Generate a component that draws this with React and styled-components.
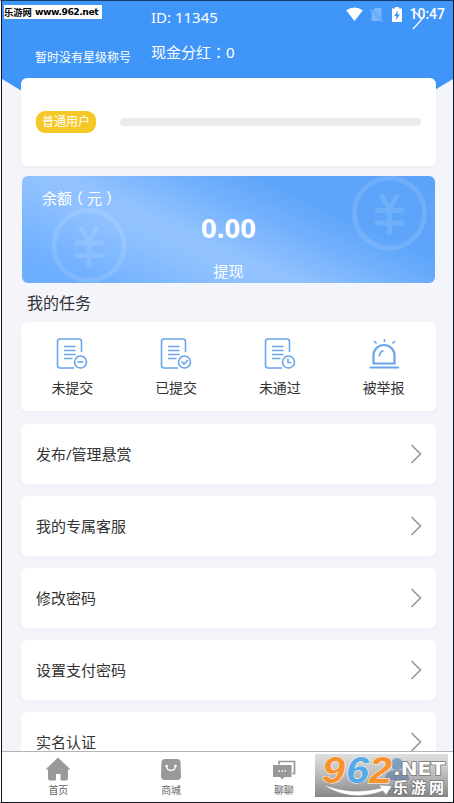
import React from 'react';
import styled, { createGlobalStyle } from 'styled-components';

const Global = createGlobalStyle`
  * { box-sizing: border-box; }
  body { margin: 0; background: #fff; overflow: hidden; }
`;
const Window = styled.div`
  width: 454px; height: 803px; overflow: hidden; position: relative;
  border: 1px solid #0d1420; border-top-color: #173c6c; border-left-color: #fff;
  font-family: "Noto Sans", "Noto Sans CJK SC", sans-serif; color: #333;
`;
const Screen = styled.div`
  height: 801px; border-left: 1px solid #0d1420; background: #f3f5fa;
  display: flex; flex-direction: column; overflow: hidden;
`;
const Scroll = styled.main`
  flex: 1; min-height: 0; overflow: hidden; position: relative;
`;
const HeaderShape = styled.svg`
  position: absolute; left: 0; top: 0; width: 451px; height: 100px;
`;
const Header = styled.header`
  position: relative; height: 77px; display: flex; color: #fff;
`;
const Star = styled.div`
  width: 149px; padding: 48px 0 0 33px; font-size: 12px; line-height: 18px; white-space: nowrap;
`;
const Ids = styled.div`
  flex: 1; padding-top: 5px; font-size: 15px; line-height: 22px; white-space: nowrap;
`;
const IdLine = styled.div`height: 35px;`;
const WideMark = styled.span`font-family: "Noto Sans CJK TC", sans-serif;`;
const Paren = styled.span`display: inline-block; transform: translateX(${p => p.$shift}px);`;
const Status = styled.div`
  position: absolute; right: 8px; top: 4px; height: 18px; display: flex; align-items: center;
  font: 500 14px/18px Roboto, sans-serif;
`;
const StatusIcon = styled.svg`
  display: block; width: ${p => p.$w}px; height: ${p => p.$h || 15}px; margin-right: ${p => p.$gap}px;
`;
const HeaderArrow = styled.svg`
  position: absolute; left: 408px; top: 8px; width: 14px; height: 22px;
`;
const Mark = styled.div`
  position: absolute; left: 3px; top: 4px; width: 98px; height: 14px; background: #fff; color: #000;
  display: flex; align-items: center; gap: 3px; white-space: nowrap;
`;
const MarkName = styled.span`font: 700 9.3px/14px "Noto Sans CJK SC", sans-serif;`;
const MarkSite = styled.span`
  font: 700 9.2px/14px "DejaVu Sans", sans-serif; letter-spacing: -0.45px;
`;
const Card = styled.section`
  position: relative; width: 415px; margin: 0 0 ${p => p.$gap}px 19px; height: ${p => p.$h}px;
  background: #fff; border-radius: 6px; box-shadow: 0 2px 5px rgba(60,80,120,.035);
  display: flex; align-items: center;
`;
const Tag = styled.span`
  margin-left: 15px; width: 60px; height: 22px; border-radius: 9px; background: #f5c828; color: #fff;
  font-size: 12px; line-height: 21px; text-align: center;
`;
const Track = styled.div`
  width: 301px; height: 8px; margin-left: 24px; border-radius: 4px; background: #eaeaea;
`;
const Balance = styled.section`
  position: relative; width: 413px; height: 107px; margin: 0 0 9px 20px; border-radius: 6px;
  overflow: hidden; color: #fff;
  background: linear-gradient(205deg, #5ba3fa 0%, #5ea5fa 28%, #72b0fc 40%, #92c3ff 58%, #8fc1ff 66%, #6eafff 90%, #6caeff 100%);
`;
const Coins = styled.svg`position: absolute; left: 0; top: 0; width: 413px; height: 107px;`;
const BalanceLabel = styled.div`
  position: relative; padding: 11px 0 0 20px; font-size: 15px; line-height: 22px; height: 33px;
`;
const Amount = styled.div`
  position: relative; text-align: center; font-size: 27.5px; line-height: 38px; font-weight: 700;
`;
const Withdraw = styled.div`
  position: relative; text-align: center; font-size: 15px; line-height: 22px; margin-top: 13px;
`;
const Heading = styled.h2`
  margin: 0 0 8px 25px; font-size: 16px; line-height: 22px; height: 22px; font-weight: 400;
`;
const Task = styled.div`
  flex: 1; height: 100%; display: flex; flex-direction: column; align-items: center;
  padding: 14px 1px 0 0; font-size: 14px; line-height: 20px; gap: 7px;
`;
const TaskSvg = styled.svg`width: 34px; height: 35px; display: block; fill: none; stroke: #68a5ec; stroke-width: 1.6;`;
const RowLabel = styled.span`flex: 1; padding: 0 0 0 15px; font-size: 15px; line-height: 22px;`;
const Chevron = styled.svg`width: 12px; height: 20px; margin-right: 14px; fill: none; stroke: #999; stroke-width: 1.7;`;
const Tabs = styled.nav`
  height: 51px; flex: none; background: #fff; border-top: 1px solid #b4b4b4; display: flex;
`;
const Tab = styled.div`
  flex: 1; display: flex; flex-direction: column; align-items: center; padding-top: 5px;
  color: ${p => (p.$active ? '#3e82c8' : '#666')}; font-size: 10px; line-height: 14px; gap: 2px;
`;
const TabSvg = styled.svg`width: 26px; height: 24px; display: block;`;
const Watermark = styled.svg`
  position: absolute; left: 314px; top: 753px; width: 133px; height: 43px; overflow: visible;
`;

const Doc = ({ children }) => (
  <TaskSvg viewBox="0 0 34 35">
    <path d="M26.500 16V5.500Q26.500 3 24 3H5Q2.500 3 2.500 5.500V29.500Q2.500 32 5 32H19" />
    <path d="M9 10.500H20.500M9 14.500H20.500M9 18.500H20.500M9 22.500H17.500" />
    <circle cx="25.500" cy="26" r="6" />
    {children}
  </TaskSvg>
);
const Yen = ({ x, y }) => (
  <g transform={`translate(${x} ${y})`} fill="none" stroke="#fff" strokeOpacity="0.12" strokeWidth="4.800">
    <circle r="35" />
    <path strokeLinecap="round" strokeLinejoin="round" d="M-7.500-17L0-4L7.500-17M0-4V20M-12.500-2.500H12.500M-12.500 10H12.500" />
  </g>
);
const tasks = [
  ['未提交', <Doc key="a"><path d="M22.500 26H28.500" /></Doc>],
  ['已提交', <Doc key="b"><path d="M22.500 25.500L25 28L29 24" /></Doc>],
  ['未通过', <Doc key="c"><path d="M25 22.500V26.500H28.500" /></Doc>],
  ['被举报', (
    <TaskSvg key="d" viewBox="0 0 34 35">
      <path strokeWidth="2.200" d="M6.500 27.500V19.500A10.500 10.500 0 0 1 27.500 19.500V27.500Z" />
      <path strokeWidth="2" d="M2.500 31.500H32" />
      <path d="M12.500 20.500Q12.500 16 16.500 14.500M17.500 3V6M7 5L9.500 7.500M28 5L25.500 7.500" />
    </TaskSvg>
  )],
];
const rows = ['发布/管理悬赏', '我的专属客服', '修改密码', '设置支付密码', '实名认证'];

export default function App() {
  return (
    <Window>
      <Global />
      <Screen>
        <Scroll>
          <HeaderShape viewBox="0 0 451 100">
            <path fill="#3f96f8" d="M0 0H451V78Q225 220 0 78Z" />
          </HeaderShape>
          <Header>
            <Star>暂时没有星级称号</Star>
            <Ids>
              <IdLine>ID: 11345</IdLine>
              <IdLine>现金分红<WideMark lang="zh-TW">：</WideMark>0</IdLine>
            </Ids>
            <HeaderArrow viewBox="0 0 14 22">
              <path d="M4 2L12 10L3 20" fill="none" stroke="#fff" strokeWidth="1.2" />
            </HeaderArrow>
            <Status>
              <StatusIcon $w={17} $h={14} $gap={7} viewBox="0 0 18 15"><path fill="#fff" d="M0 3.500Q9-2.500 18 3.500L9 15Z" /></StatusIcon>
              <StatusIcon $w={13} $gap={9} viewBox="0 0 13 15">
                <path fill="#78b5fb" d="M5 1H11.500V12L3 3.500ZM1.500 4.500L11 14H1.500Z" />
                <path stroke="#78b5fb" strokeWidth="1.2" d="M0 2L12.500 14.500" />
              </StatusIcon>
              <StatusIcon $w={10} $gap={7} viewBox="0 0 10 15">
                <path fill="#fff" d="M3 0H7V1.500H10V15H0V1.500H3Z" />
                <path fill="#3f96f8" d="M6 3.500L2 9H4.500L4 13L8 7.500H5.500Z" />
              </StatusIcon>
              10:47
            </Status>
          </Header>
          <Card $h={88} $gap={10}><Tag>普通用户</Tag><Track /></Card>
          <Balance>
            <Coins viewBox="0 0 413 107">
              <Yen x={67} y={69.5} />
              <Yen x={367.5} y={37} />
            </Coins>
            <BalanceLabel>余额<Paren $shift={-4}>（</Paren>元<Paren $shift={4}>）</Paren></BalanceLabel>
            <Amount>0.00</Amount>
            <Withdraw>提现</Withdraw>
          </Balance>
          <Heading>我的任务</Heading>
          <Card $h={89} $gap={13}>
            {tasks.map(([name, icon]) => <Task key={name}>{icon}<span>{name}</span></Task>)}
          </Card>
          {rows.map(name => (
            <Card key={name} $h={60} $gap={12}>
              <RowLabel>{name}</RowLabel>
              <Chevron viewBox="0 0 12 20"><path d="M1.500 1L10.500 10L1.500 19" /></Chevron>
            </Card>
          ))}
        </Scroll>
        <Tabs>
          <Tab>
            <TabSvg viewBox="0 0 26 24"><path fill="#999" stroke="#999" strokeLinejoin="round" d="M13 1L24.500 12H22.500V21.500Q22.500 23 21 23H16V16.500H10.500V23H5Q3.500 23 3.500 21.500V12H1.500Z" /></TabSvg>
            首页
          </Tab>
          <Tab>
            <TabSvg viewBox="0 0 26 24">
              <path fill="#999" d="M7 2H19Q22 2 22.500 5L23 19Q23 23 19.500 23H6.500Q3 23 3 19L3.500 5Q4 2 7 2Z" />
              <path fill="none" stroke="#fff" strokeWidth="1.500" d="M8.500 9Q9 13.500 13 13.500T17.500 9" />
              <circle cx="8.500" cy="9" r="1.300" fill="#fff" /><circle cx="17.500" cy="9" r="1.300" fill="#fff" />
            </TabSvg>
            商城
          </Tab>
          <Tab>
            <TabSvg viewBox="0 0 26 24">
              <path fill="none" stroke="#999" strokeWidth="1.700" d="M8 7.500V4.500H23.500V16.500H21" />
              <path fill="#999" d="M2 8H20.500V20H13.500L11 22.500L9 20H2Z" />
              <path stroke="#fff" strokeWidth="1.500" strokeDasharray="1.500 1.500" d="M7.500 14H15" />
            </TabSvg>
            聊聊
          </Tab>
          <Tab $active>
            <TabSvg viewBox="0 0 26 24"><circle cx="13" cy="7" r="6" fill="#2f7fd6" /><path fill="#2f7fd6" d="M1 23Q1 13 13 13T25 23Z" /></TabSvg>
            我的
          </Tab>
        </Tabs>
      </Screen>
      <Mark><MarkName>乐游网</MarkName><MarkSite>www.962.net</MarkSite></Mark>
      <Watermark viewBox="0 0 133 43">
        <defs>
          <linearGradient id="shade" x2="0" y2="1"><stop stopColor="#c4c4c4" stopOpacity=".55" /><stop offset="1" stopColor="#707070" stopOpacity=".85" /></linearGradient>
        </defs>
        <rect width="133" height="43" fill="url(#shade)" />
        <g fontFamily="Liberation Sans" fontWeight="700" fontStyle="italic" fontSize="36" stroke="#fff" strokeWidth="1" paintOrder="stroke">
          <text x="7" y="28.500" fill="#f8922f" textLength="23" lengthAdjust="spacingAndGlyphs">9</text>
          <text x="31" y="28.500" fill="#55a9e7" textLength="23" lengthAdjust="spacingAndGlyphs">6</text>
          <text x="54" y="28.500" fill="#f8922f" textLength="23" lengthAdjust="spacingAndGlyphs">2</text>
        </g>
        <path fill="#fff" stroke="#888" strokeWidth=".5" d="M7 30Q36 42 66 34L64 31L77 32L71 41L68 37Q34 49 7 30Z" />
        <g fill="#fff" stroke="#777" strokeWidth="1.500" paintOrder="stroke" fontWeight="700">
          <text x="78" y="21" fontFamily="DejaVu Sans" fontSize="18" textLength="52" lengthAdjust="spacingAndGlyphs">.NET</text>
          <text x="78" y="39" fontFamily="Noto Sans CJK SC" fontSize="15" textLength="51">乐游网</text>
        </g>
      </Watermark>
    </Window>
  );
}
